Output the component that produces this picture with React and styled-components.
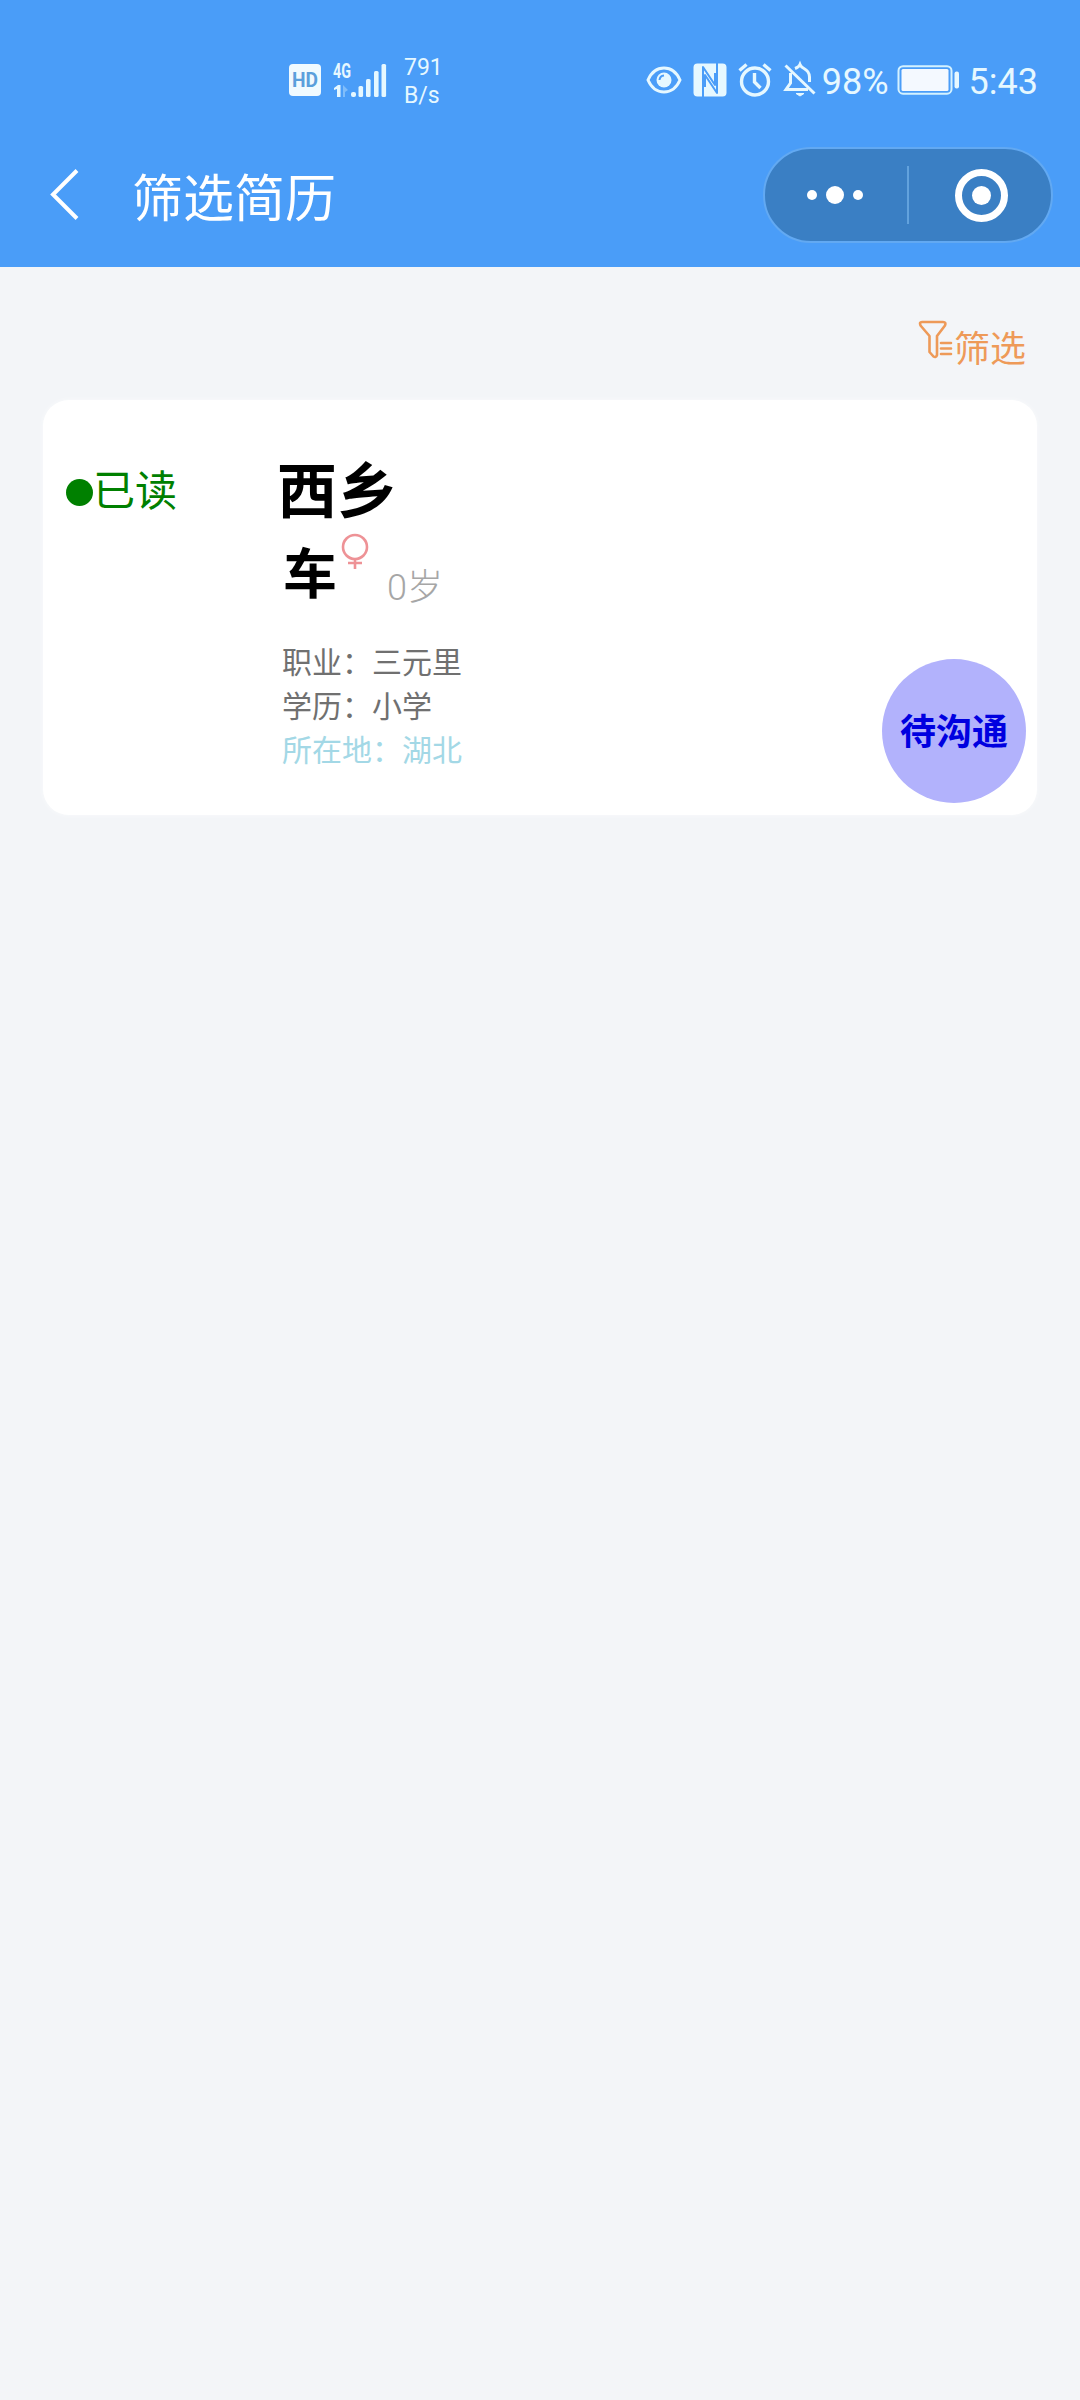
import styled, { createGlobalStyle } from 'styled-components';

const App = () => {
  return (
    <>
      <GlobalStyle />
      <Header>
        <StatusBar>
          <HdIcon />
          <SignalIcon />
          <Speed>
            <span>791</span>
            <span>B/s</span>
          </Speed>
          <StatusRight>
            <EyeIcon />
            <NfcIcon />
            <AlarmIcon />
            <MutedIcon />
            <StatusText>98%</StatusText>
            <BatteryIcon />
            <StatusText>5:43</StatusText>
          </StatusRight>
        </StatusBar>
        <NavBar>
          <BackIcon />
          <Title>筛选简历</Title>
          <Capsule>
            <Half $right={3}>
              <Dot $size={10} />
              <Dot $size={18} />
              <Dot $size={10} />
            </Half>
            <Divider />
            <Half $left={3}>
              <Ring>
                <Dot $size={19} />
              </Ring>
            </Half>
          </Capsule>
        </NavBar>
      </Header>
      <Filter>
        <FilterIcon />
        <FilterText>筛选</FilterText>
      </Filter>
      <Card>
        <Read>
          <Dot $size={27} $color={`#008000`} />
          <ReadText>已读</ReadText>
        </Read>
        <Resume>
          <Place>西乡</Place>
          <Person>
            <Name>车</Name>
            <FemaleIcon />
            <Age>0岁</Age>
          </Person>
          <Info>职业：三元里</Info>
          <Info>学历：小学</Info>
          <Info $color={`#a3d8e6`}>所在地：湖北</Info>
        </Resume>
        <Badge>待沟通</Badge>
      </Card>
    </>
  );
};

const HdIcon = () => (
  <Icon width="32" height="32" viewBox="0 0 32 32">
    <rect width="32" height="32" rx="4" fill="#f0faff" />
    <text x="16" y="23" textAnchor="middle" textLength="26" lengthAdjust="spacingAndGlyphs" fontFamily="Roboto, sans-serif" fontSize="20" fontWeight="700" fill="#5a9fdc">
      HD
    </text>
  </Icon>
);

const SignalIcon = () => (
  <Icon width="54" height="34" viewBox="0 0 54 34" $left={12} fill="#e6f8ff">
    <text x="0" y="14.5" textLength="18" lengthAdjust="spacingAndGlyphs" fontFamily="Roboto, sans-serif" fontSize="20" fontWeight="700">
      4G
    </text>
    <path d="M1 25 L5 22 H7.5 V34 H4 V26 L1 27Z" />
    <path d="M10 22 L15 27 L12 29 V34 H10Z" opacity="0.35" />
    <rect x="18" y="29" width="5" height="5" rx="2" />
    <rect x="25.5" y="23" width="4.6" height="11" rx="1.5" />
    <rect x="33" y="16" width="4.6" height="18" rx="1.5" />
    <rect x="41" y="8" width="4.6" height="26" rx="1.5" />
    <rect x="48.5" y="1" width="4.6" height="33" rx="1.5" />
  </Icon>
);

const EyeIcon = () => (
  <Icon width="36" height="28" viewBox="0 0 36 28">
    <path d="M2 14 C9 -2 27 -2 34 14 C27 30 9 30 2 14Z" fill="none" stroke="#e6f8ff" strokeWidth="3" />
    <circle cx="18" cy="14" r="7.5" fill="#e6f8ff" />
    <path d="M13.5 14 A5 5 0 0 1 18 9.5" fill="none" stroke="#4a9df8" strokeWidth="2" />
  </Icon>
);

const NfcIcon = () => (
  <Icon width="34" height="34" viewBox="0 0 34 34" $left={11}>
    <rect x="0.5" y="0.5" width="33" height="33" rx="4" fill="#e6f8ff" />
    <path d="M10 34 V4 L22 22 V10 M24 0 V30 L12 12 V24" fill="none" stroke="#4a9df8" strokeWidth="2" strokeLinejoin="round" />
  </Icon>
);

const AlarmIcon = () => (
  <Icon width="34" height="34" viewBox="0 0 34 34" $left={11} fill="none" stroke="#e6f8ff" strokeWidth="3.4">
    <circle cx="17" cy="18.5" r="13.5" />
    <path d="M16.5 10 V19 L22.5 25 M1.5 7.5 L8.5 1.5 M32.5 7.5 L25.5 1.5" />
  </Icon>
);

const MutedIcon = () => (
  <Icon width="34" height="34" viewBox="0 0 34 34" $left={11} fill="none" stroke="#e6f8ff" strokeWidth="3">
    <path d="M2.5 2.5 L31.5 30.5" />
    <path d="M12 5.5 Q16 4 17 1.5 Q18 4 21 5.5 Q26.5 8.5 26.5 14 V19" />
    <path d="M7.5 10 V20 L3 26.5 H25" />
    <path d="M13 30.5 H21 L17 33Z" fill="#e6f8ff" strokeWidth="1" />
  </Icon>
);

const BatteryIcon = () => (
  <Icon width="62" height="30" viewBox="0 0 62 30" $left={8} $right={5}>
    <rect x="1.5" y="1.2" width="53" height="27.5" rx="4.5" fill="none" stroke="#d4f2ff" strokeWidth="2" />
    <rect x="4.5" y="4" width="47" height="22" rx="1.5" fill="#f4f9ff" />
    <rect x="57.5" y="6.5" width="4.5" height="17" rx="2" fill="#e6f8ff" />
  </Icon>
);

const BackIcon = () => (
  <Icon width="28" height="52" viewBox="0 0 28 52" fill="none" stroke="#fff" strokeWidth="4">
    <path d="M28 1.5 L4 25.5 L28 49.5" />
  </Icon>
);

const FilterIcon = () => (
  <Icon width="36" height="42" viewBox="0 0 36 42" fill="none" stroke="#ee9a58" strokeWidth="2.6" strokeLinejoin="round" strokeLinecap="round">
    <path d="M4 3 H25 Q28.5 3 27 6.5 L19 17 V36 Q18 39 15.5 37.5 L11.5 33 V17 L2.5 6.5 Q1 3 4 3Z" />
    <path d="M23 24 H33 M23 29.5 H33 M23 35 H33" />
  </Icon>
);

const FemaleIcon = () => (
  <Icon width="28" height="39" viewBox="0 0 28 39" $left={4} fill="none" stroke="#ee9296" strokeWidth="2.6">
    <circle cx="14" cy="14" r="12" />
    <path d="M14 26 V36 M7 30 H21" />
  </Icon>
);

const GlobalStyle = createGlobalStyle`
  body {
    margin: 0;
    min-height: 2400px;
    background: #f3f5f8;
    font-family: Roboto, 'Noto Sans CJK SC', sans-serif;
  }
`;

const Icon = styled.svg`
  display: block;
  flex: none;
  overflow: visible;
  margin-left: ${props => props.$left || 0}px;
  margin-right: ${props => props.$right || 0}px;
`;

const Header = styled.header`
  height: 267px;
  background: #4a9df8;
`;

const StatusBar = styled.div`
  display: flex;
  align-items: center;
  box-sizing: border-box;
  height: 124px;
  padding: 36px 42px 0 289px;
  color: #e6f8ff;
`;

const Speed = styled.div`
  display: flex;
  flex-direction: column;
  margin-left: 17px;
  padding-top: 3px;
  font-size: 23px;
  line-height: 28px;
`;

const StatusRight = styled.div`
  display: flex;
  align-items: center;
  margin-left: auto;
`;

const StatusText = styled.span`
  margin-left: 5px;
  padding-top: 4px;
  font-size: 36px;
  line-height: 40px;
`;

const NavBar = styled.div`
  display: flex;
  align-items: center;
  box-sizing: border-box;
  height: 142px;
  padding: 0 27px 0 49px;
`;

const Title = styled.h1`
  margin: 0 0 0 55px;
  padding-top: 9px;
  font-size: 51px;
  font-weight: 400;
  line-height: 60px;
  color: #fff;
`;

const Capsule = styled.div`
  display: flex;
  align-items: center;
  box-sizing: border-box;
  width: 290px;
  height: 96px;
  margin-left: auto;
  border: 2px solid #62a9f2;
  border-radius: 48px;
  background: #3a7fc4;
`;

const Half = styled.div`
  display: flex;
  flex: 1;
  align-items: center;
  justify-content: center;
  gap: 9px;
  padding-left: ${props => props.$left || 0}px;
  padding-right: ${props => props.$right || 0}px;
`;

const Divider = styled.div`
  width: 2px;
  height: 58px;
  background: #62a2dd;
`;

const Dot = styled.i`
  flex: none;
  width: ${props => props.$size}px;
  height: ${props => props.$size}px;
  border-radius: 50%;
  background: ${props => props.$color || `#fff`};
`;

const Ring = styled.div`
  display: flex;
  align-items: center;
  justify-content: center;
  width: 39px;
  height: 39px;
  border: 7px solid #fff;
  border-radius: 50%;
`;

const Filter = styled.div`
  display: flex;
  justify-content: flex-end;
  height: 81px;
  padding: 52px 54px 0 0;
`;

const FilterText = styled.span`
  margin-top: 6px;
  font-size: 36px;
  line-height: 50px;
  white-space: nowrap;
  color: #ee9a58;
`;

const Card = styled.section`
  display: flex;
  box-sizing: border-box;
  width: 994px;
  height: 415px;
  margin: 0 auto;
  padding: 0 11px 0 23px;
  border-radius: 26px;
  background: #fff;
  box-shadow: 0 0 4px #fafbfc;
`;

const Read = styled.div`
  display: flex;
  align-items: center;
  width: 211px;
  height: 60px;
  margin-top: 62px;
  color: #008000;
`;

const ReadText = styled.span`
  font-size: 42px;
  line-height: 60px;
`;

const Resume = styled.div`
  flex: 1;
  padding-top: 53px;
`;

const Place = styled.div`
  font-size: 60px;
  font-weight: 700;
  line-height: 80px;
`;

const Person = styled.div`
  display: flex;
  height: 108px;
`;

const Name = styled.div`
  margin-left: 6px;
  font-size: 54px;
  font-weight: 700;
  line-height: 86px;
`;

const Age = styled.div`
  margin: 27px 0 0 18px;
  font-size: 36px;
  font-weight: 300;
  line-height: 56px;
  color: #a6a6a6;
`;

const Info = styled.div`
  margin-left: 5px;
  font-size: 30px;
  line-height: 44px;
  color: ${props => props.$color || `#707070`};
`;

const Badge = styled.div`
  display: flex;
  align-self: flex-end;
  align-items: center;
  justify-content: center;
  box-sizing: border-box;
  width: 144px;
  height: 144px;
  margin-bottom: 12px;
  padding-top: 4px;
  border-radius: 50%;
  background: #b2b2fc;
  font-size: 36px;
  font-weight: 700;
  line-height: 50px;
  color: #0000e0;
`;

export default App;
